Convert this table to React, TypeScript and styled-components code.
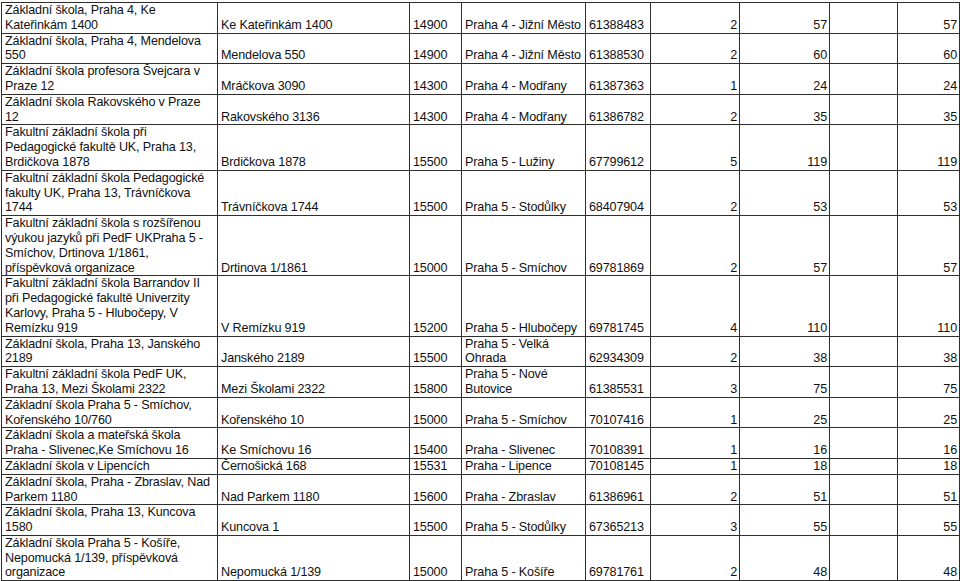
import React from 'react';
import styled, { createGlobalStyle } from 'styled-components';

const GlobalStyle = createGlobalStyle`
  html, body {
    margin: 0;
    padding: 0;
    background: #fff;
  }
  body {
    font-family: "Liberation Sans", Arial, sans-serif;
    color: #111;
  }
`;

const Page = styled.div`
  padding: 2px 0 0 1px;
  width: 959px;
`;

const Table = styled.table`
  border-collapse: collapse;
  table-layout: fixed;
  width: 958px;
  font-size: 12.6px;
  letter-spacing: -0.15px;
  line-height: 14.8px;
`;

const Cell = styled.td<{ $align?: 'left' | 'right' }>`
  border: 1px solid #2e2e2e;
  padding: 0 ${(p) => (p.$align === 'right' ? '2px' : '0')} 0 ${(p) => (p.$align === 'right' ? '0' : '3px')};
  text-align: ${(p) => p.$align || 'left'};
  vertical-align: bottom;
  white-space: nowrap;
  overflow: hidden;
`;

type Row = {
  name: string[];
  street: string;
  zip: string;
  city: string[];
  ico: string;
  classes: string;
  pupils: string;
  extra: string;
  total: string;
};

const rows: Row[] = [
  { name: ['Základní škola, Praha 4, Ke', 'Kateřinkám 1400'], street: 'Ke Kateřinkám 1400', zip: '14900', city: ['Praha 4 - Jižní Město'], ico: '61388483', classes: '2', pupils: '57', extra: '', total: '57' },
  { name: ['Základní škola, Praha 4, Mendelova', '550'], street: 'Mendelova 550', zip: '14900', city: ['Praha 4 - Jižní Město'], ico: '61388530', classes: '2', pupils: '60', extra: '', total: '60' },
  { name: ['Základní škola profesora Švejcara v', 'Praze 12'], street: 'Mráčkova 3090', zip: '14300', city: ['Praha 4 - Modřany'], ico: '61387363', classes: '1', pupils: '24', extra: '', total: '24' },
  { name: ['Základní škola Rakovského v Praze', '12'], street: 'Rakovského 3136', zip: '14300', city: ['Praha 4 - Modřany'], ico: '61386782', classes: '2', pupils: '35', extra: '', total: '35' },
  { name: ['Fakultní základní škola při', 'Pedagogické fakultě UK, Praha 13,', 'Brdičkova 1878'], street: 'Brdičkova 1878', zip: '15500', city: ['Praha 5 - Lužiny'], ico: '67799612', classes: '5', pupils: '119', extra: '', total: '119' },
  { name: ['Fakultní základní škola Pedagogické', 'fakulty UK, Praha 13, Trávníčkova', '1744'], street: 'Trávníčkova 1744', zip: '15500', city: ['Praha 5 - Stodůlky'], ico: '68407904', classes: '2', pupils: '53', extra: '', total: '53' },
  { name: ['Fakultní základní škola s rozšířenou', 'výukou jazyků při PedF UKPraha 5 -', 'Smíchov, Drtinova 1/1861,', 'příspěvková organizace'], street: 'Drtinova 1/1861', zip: '15000', city: ['Praha 5 - Smíchov'], ico: '69781869', classes: '2', pupils: '57', extra: '', total: '57' },
  { name: ['Fakultní základní škola Barrandov II', 'při Pedagogické fakultě Univerzity', 'Karlovy, Praha 5 - Hlubočepy, V', 'Remízku 919'], street: 'V Remízku 919', zip: '15200', city: ['Praha 5 - Hlubočepy'], ico: '69781745', classes: '4', pupils: '110', extra: '', total: '110' },
  { name: ['Základní škola, Praha 13, Janského', '2189'], street: 'Janského 2189', zip: '15500', city: ['Praha 5 - Velká', 'Ohrada'], ico: '62934309', classes: '2', pupils: '38', extra: '', total: '38' },
  { name: ['Fakultní základní škola PedF UK,', 'Praha 13, Mezi Školami 2322'], street: 'Mezi Školami 2322', zip: '15800', city: ['Praha 5 - Nové', 'Butovice'], ico: '61385531', classes: '3', pupils: '75', extra: '', total: '75' },
  { name: ['Základní škola Praha 5 - Smíchov,', 'Kořenského 10/760'], street: 'Kořenského 10', zip: '15000', city: ['Praha 5 - Smíchov'], ico: '70107416', classes: '1', pupils: '25', extra: '', total: '25' },
  { name: ['Základní škola a mateřská škola', 'Praha - Slivenec,Ke Smíchovu 16'], street: 'Ke Smíchovu 16', zip: '15400', city: ['Praha - Slivenec'], ico: '70108391', classes: '1', pupils: '16', extra: '', total: '16' },
  { name: ['Základní škola v Lipencích'], street: 'Černošická 168', zip: '15531', city: ['Praha - Lipence'], ico: '70108145', classes: '1', pupils: '18', extra: '', total: '18' },
  { name: ['Základní škola, Praha - Zbraslav, Nad', 'Parkem 1180'], street: 'Nad Parkem 1180', zip: '15600', city: ['Praha - Zbraslav'], ico: '61386961', classes: '2', pupils: '51', extra: '', total: '51' },
  { name: ['Základní škola, Praha 13, Kuncova', '1580'], street: 'Kuncova 1', zip: '15500', city: ['Praha 5 - Stodůlky'], ico: '67365213', classes: '3', pupils: '55', extra: '', total: '55' },
  { name: ['Základní škola Praha 5 - Košíře,', 'Nepomucká 1/139, příspěvková', 'organizace'], street: 'Nepomucká 1/139', zip: '15000', city: ['Praha 5 - Košíře'], ico: '69781761', classes: '2', pupils: '48', extra: '', total: '48' },
];

const widths = [216, 192, 52, 124, 65, 89, 90, 68, 62];

const Lines: React.FC<{ lines: string[] }> = ({ lines }) => (
  <>
    {lines.map((l, i) => (
      <React.Fragment key={i}>
        {i > 0 && <br />}
        {l}
      </React.Fragment>
    ))}
  </>
);

export default function App() {
  return (
    <>
      <GlobalStyle />
      <Page>
        <Table>
          <colgroup>
            {widths.map((w, i) => (
              <col key={i} style={{ width: w }} />
            ))}
          </colgroup>
          <tbody>
            {rows.map((r) => (
              <tr key={r.ico}>
                <Cell><Lines lines={r.name} /></Cell>
                <Cell>{r.street}</Cell>
                <Cell>{r.zip}</Cell>
                <Cell><Lines lines={r.city} /></Cell>
                <Cell>{r.ico}</Cell>
                <Cell $align="right">{r.classes}</Cell>
                <Cell $align="right">{r.pupils}</Cell>
                <Cell $align="right">{r.extra}</Cell>
                <Cell $align="right">{r.total}</Cell>
              </tr>
            ))}
          </tbody>
        </Table>
      </Page>
    </>
  );
}
